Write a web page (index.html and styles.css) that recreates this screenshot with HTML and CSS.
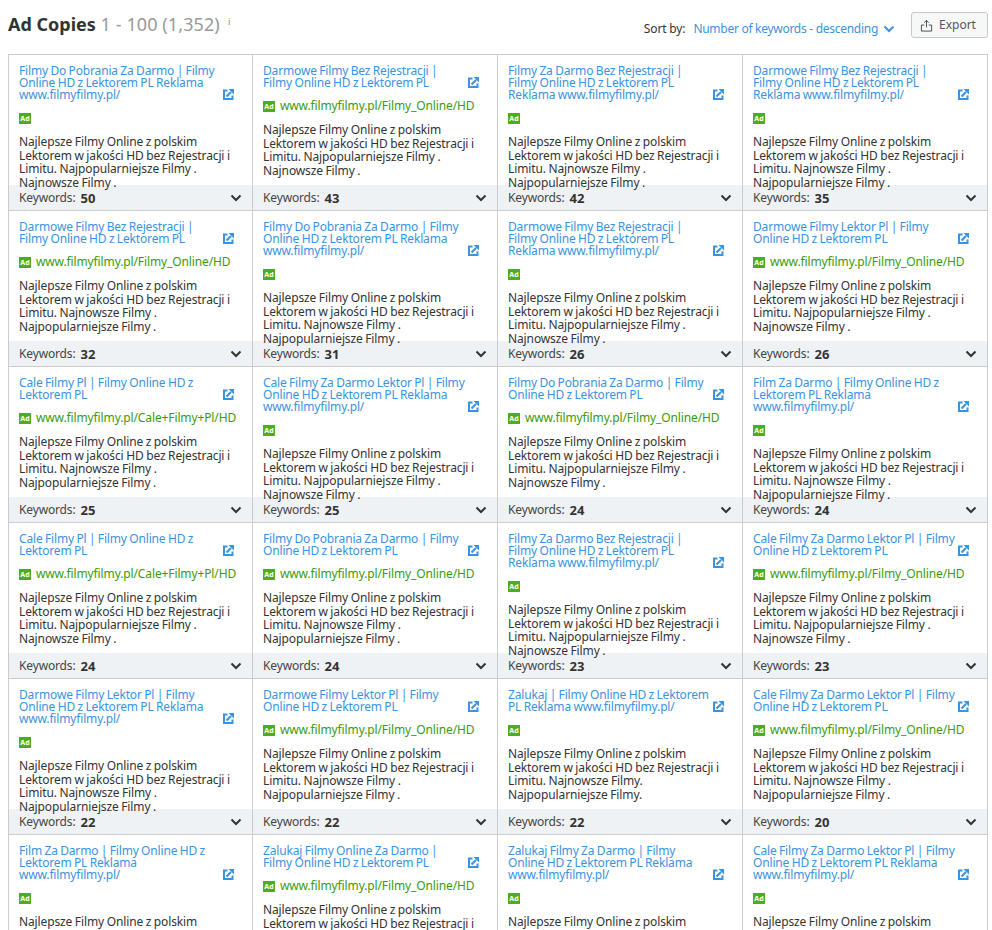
FILE: index.html
```html
<!DOCTYPE html>
<html lang="pl">
<head>
<meta charset="utf-8">
<title>Ad Copies</title>
<link rel="stylesheet" href="styles.css">
</head>
<body>
<svg class="defs" width="0" height="0" aria-hidden="true">
  <symbol id="ext" viewBox="0 0 11 11"><path d="M4.500 1.500H1v8.500h8.500V6.500" fill="none" stroke="currentColor" stroke-width="2"/><path d="M3.500 7.500 8 3" fill="none" stroke="currentColor" stroke-width="2.200"/><path d="M5.500 0H11V5.500z" fill="currentColor"/></symbol>
  <symbol id="chev" viewBox="0 0 12 8"><path d="M1.500 1.500 6 6l4.500-4.500" fill="none" stroke="currentColor" stroke-width="2"/></symbol>
</svg>
<main class="page">
  <header class="top">
    <h1 class="heading">Ad Copies <span class="range">1 - 100 (1,352)</span><sup class="info">i</sup></h1>
    <div class="tools">
      <span class="sort-label">Sort by:</span>
      <span class="sort-value">Number of keywords - descending</span>
      <svg class="sort-chev"><use href="#chev"/></svg>
      <button class="export"><svg class="export-ico" viewBox="0 0 14 14"><path d="M7 9V1.500M4.500 4 7 1.500 9.500 4M4.500 6.500H1.500v6.500h11V6.500h-3" fill="none" stroke="currentColor" stroke-width="1"/></svg>Export</button>
    </div>
  </header>
  <section class="grid">
    <article class="ad"><div class="body"><div class="head"><a class="title">Filmy Do Pobrania Za Darmo | Filmy<br>Online HD z Lektorem PL Reklama<br>www.filmyfilmy.pl/</a><svg class="ext"><use href="#ext"/></svg></div><div class="url"><span class="badge">Ad</span></div><p class="desc">Najlepsze Filmy Online z polskim<br>Lektorem w jakości HD bez Rejestracji i<br>Limitu. Najpopularniejsze Filmy .<br>Najnowsze Filmy .</p></div><div class="foot"><span class="kw">Keywords:</span><b class="num">50</b><svg class="chev"><use href="#chev"/></svg></div></article>
    <article class="ad"><div class="body"><div class="head"><a class="title">Darmowe Filmy Bez Rejestracji |<br>Filmy Online HD z Lektorem PL</a><svg class="ext"><use href="#ext"/></svg></div><div class="url"><span class="badge">Ad</span><a class="green">www.filmyfilmy.pl/Filmy_Online/HD</a></div><p class="desc">Najlepsze Filmy Online z polskim<br>Lektorem w jakości HD bez Rejestracji i<br>Limitu. Najpopularniejsze Filmy .<br>Najnowsze Filmy .</p></div><div class="foot"><span class="kw">Keywords:</span><b class="num">43</b><svg class="chev"><use href="#chev"/></svg></div></article>
    <article class="ad"><div class="body"><div class="head"><a class="title">Filmy Za Darmo Bez Rejestracji |<br>Filmy Online HD z Lektorem PL<br>Reklama www.filmyfilmy.pl/</a><svg class="ext"><use href="#ext"/></svg></div><div class="url"><span class="badge">Ad</span></div><p class="desc">Najlepsze Filmy Online z polskim<br>Lektorem w jakości HD bez Rejestracji i<br>Limitu. Najnowsze Filmy .<br>Najpopularniejsze Filmy .</p></div><div class="foot"><span class="kw">Keywords:</span><b class="num">42</b><svg class="chev"><use href="#chev"/></svg></div></article>
    <article class="ad"><div class="body"><div class="head"><a class="title">Darmowe Filmy Bez Rejestracji |<br>Filmy Online HD z Lektorem PL<br>Reklama www.filmyfilmy.pl/</a><svg class="ext"><use href="#ext"/></svg></div><div class="url"><span class="badge">Ad</span></div><p class="desc">Najlepsze Filmy Online z polskim<br>Lektorem w jakości HD bez Rejestracji i<br>Limitu. Najnowsze Filmy .<br>Najpopularniejsze Filmy .</p></div><div class="foot"><span class="kw">Keywords:</span><b class="num">35</b><svg class="chev"><use href="#chev"/></svg></div></article>

    <article class="ad"><div class="body"><div class="head"><a class="title">Darmowe Filmy Bez Rejestracji |<br>Filmy Online HD z Lektorem PL</a><svg class="ext"><use href="#ext"/></svg></div><div class="url"><span class="badge">Ad</span><a class="green">www.filmyfilmy.pl/Filmy_Online/HD</a></div><p class="desc">Najlepsze Filmy Online z polskim<br>Lektorem w jakości HD bez Rejestracji i<br>Limitu. Najnowsze Filmy .<br>Najpopularniejsze Filmy .</p></div><div class="foot"><span class="kw">Keywords:</span><b class="num">32</b><svg class="chev"><use href="#chev"/></svg></div></article>
    <article class="ad"><div class="body"><div class="head"><a class="title">Filmy Do Pobrania Za Darmo | Filmy<br>Online HD z Lektorem PL Reklama<br>www.filmyfilmy.pl/</a><svg class="ext"><use href="#ext"/></svg></div><div class="url"><span class="badge">Ad</span></div><p class="desc">Najlepsze Filmy Online z polskim<br>Lektorem w jakości HD bez Rejestracji i<br>Limitu. Najnowsze Filmy .<br>Najpopularniejsze Filmy .</p></div><div class="foot"><span class="kw">Keywords:</span><b class="num">31</b><svg class="chev"><use href="#chev"/></svg></div></article>
    <article class="ad"><div class="body"><div class="head"><a class="title">Darmowe Filmy Bez Rejestracji |<br>Filmy Online HD z Lektorem PL<br>Reklama www.filmyfilmy.pl/</a><svg class="ext"><use href="#ext"/></svg></div><div class="url"><span class="badge">Ad</span></div><p class="desc">Najlepsze Filmy Online z polskim<br>Lektorem w jakości HD bez Rejestracji i<br>Limitu. Najpopularniejsze Filmy .<br>Najnowsze Filmy .</p></div><div class="foot"><span class="kw">Keywords:</span><b class="num">26</b><svg class="chev"><use href="#chev"/></svg></div></article>
    <article class="ad"><div class="body"><div class="head"><a class="title">Darmowe Filmy Lektor Pl | Filmy<br>Online HD z Lektorem PL</a><svg class="ext"><use href="#ext"/></svg></div><div class="url"><span class="badge">Ad</span><a class="green">www.filmyfilmy.pl/Filmy_Online/HD</a></div><p class="desc">Najlepsze Filmy Online z polskim<br>Lektorem w jakości HD bez Rejestracji i<br>Limitu. Najpopularniejsze Filmy .<br>Najnowsze Filmy .</p></div><div class="foot"><span class="kw">Keywords:</span><b class="num">26</b><svg class="chev"><use href="#chev"/></svg></div></article>

    <article class="ad"><div class="body"><div class="head"><a class="title">Cale Filmy Pl | Filmy Online HD z<br>Lektorem PL</a><svg class="ext"><use href="#ext"/></svg></div><div class="url"><span class="badge">Ad</span><a class="green">www.filmyfilmy.pl/Cale+Filmy+Pl/HD</a></div><p class="desc">Najlepsze Filmy Online z polskim<br>Lektorem w jakości HD bez Rejestracji i<br>Limitu. Najnowsze Filmy .<br>Najpopularniejsze Filmy .</p></div><div class="foot"><span class="kw">Keywords:</span><b class="num">25</b><svg class="chev"><use href="#chev"/></svg></div></article>
    <article class="ad"><div class="body"><div class="head"><a class="title">Cale Filmy Za Darmo Lektor Pl | Filmy<br>Online HD z Lektorem PL Reklama<br>www.filmyfilmy.pl/</a><svg class="ext"><use href="#ext"/></svg></div><div class="url"><span class="badge">Ad</span></div><p class="desc">Najlepsze Filmy Online z polskim<br>Lektorem w jakości HD bez Rejestracji i<br>Limitu. Najpopularniejsze Filmy .<br>Najnowsze Filmy .</p></div><div class="foot"><span class="kw">Keywords:</span><b class="num">25</b><svg class="chev"><use href="#chev"/></svg></div></article>
    <article class="ad"><div class="body"><div class="head"><a class="title">Filmy Do Pobrania Za Darmo | Filmy<br>Online HD z Lektorem PL</a><svg class="ext"><use href="#ext"/></svg></div><div class="url"><span class="badge">Ad</span><a class="green">www.filmyfilmy.pl/Filmy_Online/HD</a></div><p class="desc">Najlepsze Filmy Online z polskim<br>Lektorem w jakości HD bez Rejestracji i<br>Limitu. Najpopularniejsze Filmy .<br>Najnowsze Filmy .</p></div><div class="foot"><span class="kw">Keywords:</span><b class="num">24</b><svg class="chev"><use href="#chev"/></svg></div></article>
    <article class="ad"><div class="body"><div class="head"><a class="title">Film Za Darmo | Filmy Online HD z<br>Lektorem PL Reklama<br>www.filmyfilmy.pl/</a><svg class="ext"><use href="#ext"/></svg></div><div class="url"><span class="badge">Ad</span></div><p class="desc">Najlepsze Filmy Online z polskim<br>Lektorem w jakości HD bez Rejestracji i<br>Limitu. Najnowsze Filmy .<br>Najpopularniejsze Filmy .</p></div><div class="foot"><span class="kw">Keywords:</span><b class="num">24</b><svg class="chev"><use href="#chev"/></svg></div></article>

    <article class="ad"><div class="body"><div class="head"><a class="title">Cale Filmy Pl | Filmy Online HD z<br>Lektorem PL</a><svg class="ext"><use href="#ext"/></svg></div><div class="url"><span class="badge">Ad</span><a class="green">www.filmyfilmy.pl/Cale+Filmy+Pl/HD</a></div><p class="desc">Najlepsze Filmy Online z polskim<br>Lektorem w jakości HD bez Rejestracji i<br>Limitu. Najpopularniejsze Filmy .<br>Najnowsze Filmy .</p></div><div class="foot"><span class="kw">Keywords:</span><b class="num">24</b><svg class="chev"><use href="#chev"/></svg></div></article>
    <article class="ad"><div class="body"><div class="head"><a class="title">Filmy Do Pobrania Za Darmo | Filmy<br>Online HD z Lektorem PL</a><svg class="ext"><use href="#ext"/></svg></div><div class="url"><span class="badge">Ad</span><a class="green">www.filmyfilmy.pl/Filmy_Online/HD</a></div><p class="desc">Najlepsze Filmy Online z polskim<br>Lektorem w jakości HD bez Rejestracji i<br>Limitu. Najnowsze Filmy .<br>Najpopularniejsze Filmy .</p></div><div class="foot"><span class="kw">Keywords:</span><b class="num">24</b><svg class="chev"><use href="#chev"/></svg></div></article>
    <article class="ad"><div class="body"><div class="head"><a class="title">Filmy Za Darmo Bez Rejestracji |<br>Filmy Online HD z Lektorem PL<br>Reklama www.filmyfilmy.pl/</a><svg class="ext"><use href="#ext"/></svg></div><div class="url"><span class="badge">Ad</span></div><p class="desc">Najlepsze Filmy Online z polskim<br>Lektorem w jakości HD bez Rejestracji i<br>Limitu. Najpopularniejsze Filmy .<br>Najnowsze Filmy .</p></div><div class="foot"><span class="kw">Keywords:</span><b class="num">23</b><svg class="chev"><use href="#chev"/></svg></div></article>
    <article class="ad"><div class="body"><div class="head"><a class="title">Cale Filmy Za Darmo Lektor Pl | Filmy<br>Online HD z Lektorem PL</a><svg class="ext"><use href="#ext"/></svg></div><div class="url"><span class="badge">Ad</span><a class="green">www.filmyfilmy.pl/Filmy_Online/HD</a></div><p class="desc">Najlepsze Filmy Online z polskim<br>Lektorem w jakości HD bez Rejestracji i<br>Limitu. Najpopularniejsze Filmy .<br>Najnowsze Filmy .</p></div><div class="foot"><span class="kw">Keywords:</span><b class="num">23</b><svg class="chev"><use href="#chev"/></svg></div></article>

    <article class="ad"><div class="body"><div class="head"><a class="title">Darmowe Filmy Lektor Pl | Filmy<br>Online HD z Lektorem PL Reklama<br>www.filmyfilmy.pl/</a><svg class="ext"><use href="#ext"/></svg></div><div class="url"><span class="badge">Ad</span></div><p class="desc">Najlepsze Filmy Online z polskim<br>Lektorem w jakości HD bez Rejestracji i<br>Limitu. Najnowsze Filmy .<br>Najpopularniejsze Filmy .</p></div><div class="foot"><span class="kw">Keywords:</span><b class="num">22</b><svg class="chev"><use href="#chev"/></svg></div></article>
    <article class="ad"><div class="body"><div class="head"><a class="title">Darmowe Filmy Lektor Pl | Filmy<br>Online HD z Lektorem PL</a><svg class="ext"><use href="#ext"/></svg></div><div class="url"><span class="badge">Ad</span><a class="green">www.filmyfilmy.pl/Filmy_Online/HD</a></div><p class="desc">Najlepsze Filmy Online z polskim<br>Lektorem w jakości HD bez Rejestracji i<br>Limitu. Najnowsze Filmy .<br>Najpopularniejsze Filmy .</p></div><div class="foot"><span class="kw">Keywords:</span><b class="num">22</b><svg class="chev"><use href="#chev"/></svg></div></article>
    <article class="ad"><div class="body"><div class="head"><a class="title">Zalukaj | Filmy Online HD z Lektorem<br>PL Reklama www.filmyfilmy.pl/</a><svg class="ext"><use href="#ext"/></svg></div><div class="url"><span class="badge">Ad</span></div><p class="desc">Najlepsze Filmy Online z polskim<br>Lektorem w jakości HD bez Rejestracji i<br>Limitu. Najnowsze Filmy.<br>Najpopularniejsze Filmy.</p></div><div class="foot"><span class="kw">Keywords:</span><b class="num">22</b><svg class="chev"><use href="#chev"/></svg></div></article>
    <article class="ad"><div class="body"><div class="head"><a class="title">Cale Filmy Za Darmo Lektor Pl | Filmy<br>Online HD z Lektorem PL</a><svg class="ext"><use href="#ext"/></svg></div><div class="url"><span class="badge">Ad</span><a class="green">www.filmyfilmy.pl/Filmy_Online/HD</a></div><p class="desc">Najlepsze Filmy Online z polskim<br>Lektorem w jakości HD bez Rejestracji i<br>Limitu. Najnowsze Filmy .<br>Najpopularniejsze Filmy .</p></div><div class="foot"><span class="kw">Keywords:</span><b class="num">20</b><svg class="chev"><use href="#chev"/></svg></div></article>

    <article class="ad"><div class="body"><div class="head"><a class="title">Film Za Darmo | Filmy Online HD z<br>Lektorem PL Reklama<br>www.filmyfilmy.pl/</a><svg class="ext"><use href="#ext"/></svg></div><div class="url"><span class="badge">Ad</span></div><p class="desc">Najlepsze Filmy Online z polskim<br>Lektorem w jakości HD bez Rejestracji i<br>Limitu. Najnowsze Filmy .<br>Najpopularniejsze Filmy .</p></div></article>
    <article class="ad"><div class="body"><div class="head"><a class="title">Zalukaj Filmy Online Za Darmo |<br>Filmy Online HD z Lektorem PL</a><svg class="ext"><use href="#ext"/></svg></div><div class="url"><span class="badge">Ad</span><a class="green">www.filmyfilmy.pl/Filmy_Online/HD</a></div><p class="desc">Najlepsze Filmy Online z polskim<br>Lektorem w jakości HD bez Rejestracji i<br>Limitu. Najnowsze Filmy .<br>Najpopularniejsze Filmy .</p></div></article>
    <article class="ad"><div class="body"><div class="head"><a class="title">Zalukaj Filmy Za Darmo | Filmy<br>Online HD z Lektorem PL Reklama<br>www.filmyfilmy.pl/</a><svg class="ext"><use href="#ext"/></svg></div><div class="url"><span class="badge">Ad</span></div><p class="desc">Najlepsze Filmy Online z polskim<br>Lektorem w jakości HD bez Rejestracji i<br>Limitu. Najnowsze Filmy .<br>Najpopularniejsze Filmy .</p></div></article>
    <article class="ad"><div class="body"><div class="head"><a class="title">Cale Filmy Za Darmo Lektor Pl | Filmy<br>Online HD z Lektorem PL Reklama<br>www.filmyfilmy.pl/</a><svg class="ext"><use href="#ext"/></svg></div><div class="url"><span class="badge">Ad</span></div><p class="desc">Najlepsze Filmy Online z polskim<br>Lektorem w jakości HD bez Rejestracji i<br>Limitu. Najnowsze Filmy .<br>Najpopularniejsze Filmy .</p></div></article>
  </section>
</main>
</body>
</html>
```
FILE: styles.css
```css
* { box-sizing: border-box; }
html, body { margin: 0; padding: 0; background: #fff; }
body { font-family: "Noto Sans", sans-serif; color: #333; font-size: 12px; }
.defs { position: absolute; }
.page { width: 992px; height: 930px; overflow: hidden; padding-left: 8px; }
.top { display: flex; justify-content: space-between; height: 54px; padding-right: 4px; }
.heading { margin: 12px 0 0; font-size: 18px; line-height: 24px; font-weight: 700; color: #333; white-space: nowrap; }
.range { font-weight: 400; color: #999; letter-spacing: 0.1px; }
.info { font-size: 9px; font-weight: 400; color: #888; margin-left: 8px; vertical-align: 6px; line-height: 0; }
.tools { display: flex; align-items: flex-start; }
.sort-label { margin-top: 21px; line-height: 16px; color: #333; letter-spacing: -0.15px; }
.sort-value { margin: 21px 0 0 8px; line-height: 16px; color: #3a93e0; letter-spacing: -0.28px; }
.sort-chev { width: 12px; height: 8px; margin: 25px 0 0 5px; color: #3a93e0; }
.export { display: flex; align-items: center; gap: 6px; width: 77px; height: 26px; margin: 12px 0 0 16px; padding: 0 0 0 8px; border: 1px solid #c8c8c8; border-radius: 3px; background: #f6f7f7; font: 12px/1 "Noto Sans", sans-serif; color: #555; }
.export-ico { width: 13px; height: 13px; color: #444; }
.grid { display: grid; grid-template-columns: 244px repeat(3, 245px); grid-auto-rows: 156px; width: 980px; border-left: 1px solid #ccc; border-top: 1px solid #ccc; }
.ad { height: 156px; border-right: 1px solid #ccc; border-bottom: 1px solid #ccc; }
.body { height: 130px; padding: 10px 0 0 10px; }
.head { display: flex; justify-content: space-between; align-items: flex-end; padding-right: 18px; }
.title { display: block; font-size: 12px; line-height: 12px; color: #3a93e0; white-space: nowrap; letter-spacing: -0.16px; word-spacing: -0.5px; }
.ext { display: block; width: 11px; height: 11px; margin-bottom: 1px; color: #3a93e0; flex: none; }
.url { display: flex; align-items: center; gap: 5px; height: 14px; margin-top: 10px; white-space: nowrap; }
.badge { display: block; width: 12px; height: 11px; background: #4cae1c; color: #fff; font-size: 7px; line-height: 11px; text-align: center; font-weight: 700; }
.green { font-size: 12px; line-height: 14px; color: #3c9a0c; letter-spacing: -0.12px; }
.desc { margin: 10px 0 0; font-size: 12px; line-height: 13.500px; color: #333; white-space: nowrap; letter-spacing: -0.12px; word-spacing: -0.4px; }
.foot { display: flex; align-items: center; height: 25px; padding: 0 10px; background: #eff2f5; }
.kw { color: #444; letter-spacing: -0.15px; }
.num { margin-left: 5px; font-size: 13px; font-weight: 700; color: #333; }
.chev { width: 12px; height: 8px; margin-left: auto; color: #333; }
```
